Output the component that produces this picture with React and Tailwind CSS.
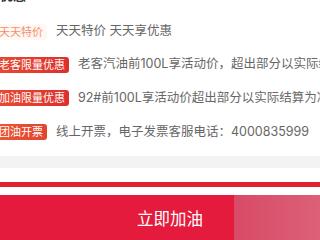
const font = { fontFamily: 'Inter, "Noto Sans CJK SC", "Noto Sans", sans-serif' };

const rows = [
  {
    tag: "天天特价",
    tagClass: "bg-[#fff7f3] text-[#f2906c]",
    text: "天天特价 天天享优惠",
    h: "h-[33px]",
  },
  {
    tag: "老客限量优惠",
    tagClass: "bg-gradient-to-r from-[#ea4a32] to-[#dc2f2c] text-white",
    text: "老客汽油前100L享活动价，超出部分以实际结算为准",
    h: "h-[33px]",
  },
  {
    tag: "加油限量优惠",
    tagClass: "bg-gradient-to-r from-[#ea4a32] to-[#dc2f2c] text-white",
    text: "92#前100L享活动价超出部分以实际结算为准",
    h: "h-[34px]",
  },
  {
    tag: "团油开票",
    tagClass: "bg-gradient-to-r from-[#ec5535] to-[#e2452f] text-white",
    text: "线上开票，电子发票客服电话：4000835999",
    h: "h-[34px]",
  },
];

export default function App() {
  return (
    <div className="w-[320px] h-[240px] overflow-hidden bg-white flex flex-col" style={font}>
      {/* cut off line on top */}
      <div className="h-[15px] overflow-hidden shrink-0">
        <div className="-mt-[14px] text-[13px] font-bold text-[#333] whitespace-nowrap">
          优惠
        </div>
      </div>

      <div className="flex flex-col -ml-[5px]">
        {rows.map((r) => (
          <div key={r.tag} className={`flex items-center gap-[9px] ${r.h} whitespace-nowrap`}>
            <span
              className={`shrink-0 px-[4px] h-[16px] leading-[16px] rounded-[3px] text-[11px] ${r.tagClass}`}
            >
              {r.tag}
            </span>
            <span className="shrink-0 text-[12.5px] text-[#666]">{r.text}</span>
          </div>
        ))}
      </div>

      <div className="h-[7px] shrink-0" />
      <div className="h-[12px] bg-[#f3f3f3] shrink-0" />
      <div className="h-[14px] shrink-0" />
      <div className="h-[5px] bg-[#e0212f] shrink-0" />
      <div className="h-[8px] shrink-0" />

      {/* bottom button */}
      <div className="flex h-[48px] shrink-0">
        <div className="w-[234px] bg-[#e41b3c] flex items-center pl-[137px]">
          <span className="text-white text-[16.5px] whitespace-nowrap">立即加油</span>
        </div>
        <div className="flex-1 bg-gradient-to-r from-[#d84a66] to-[#dc6078]" />
      </div>
    </div>
  );
}
